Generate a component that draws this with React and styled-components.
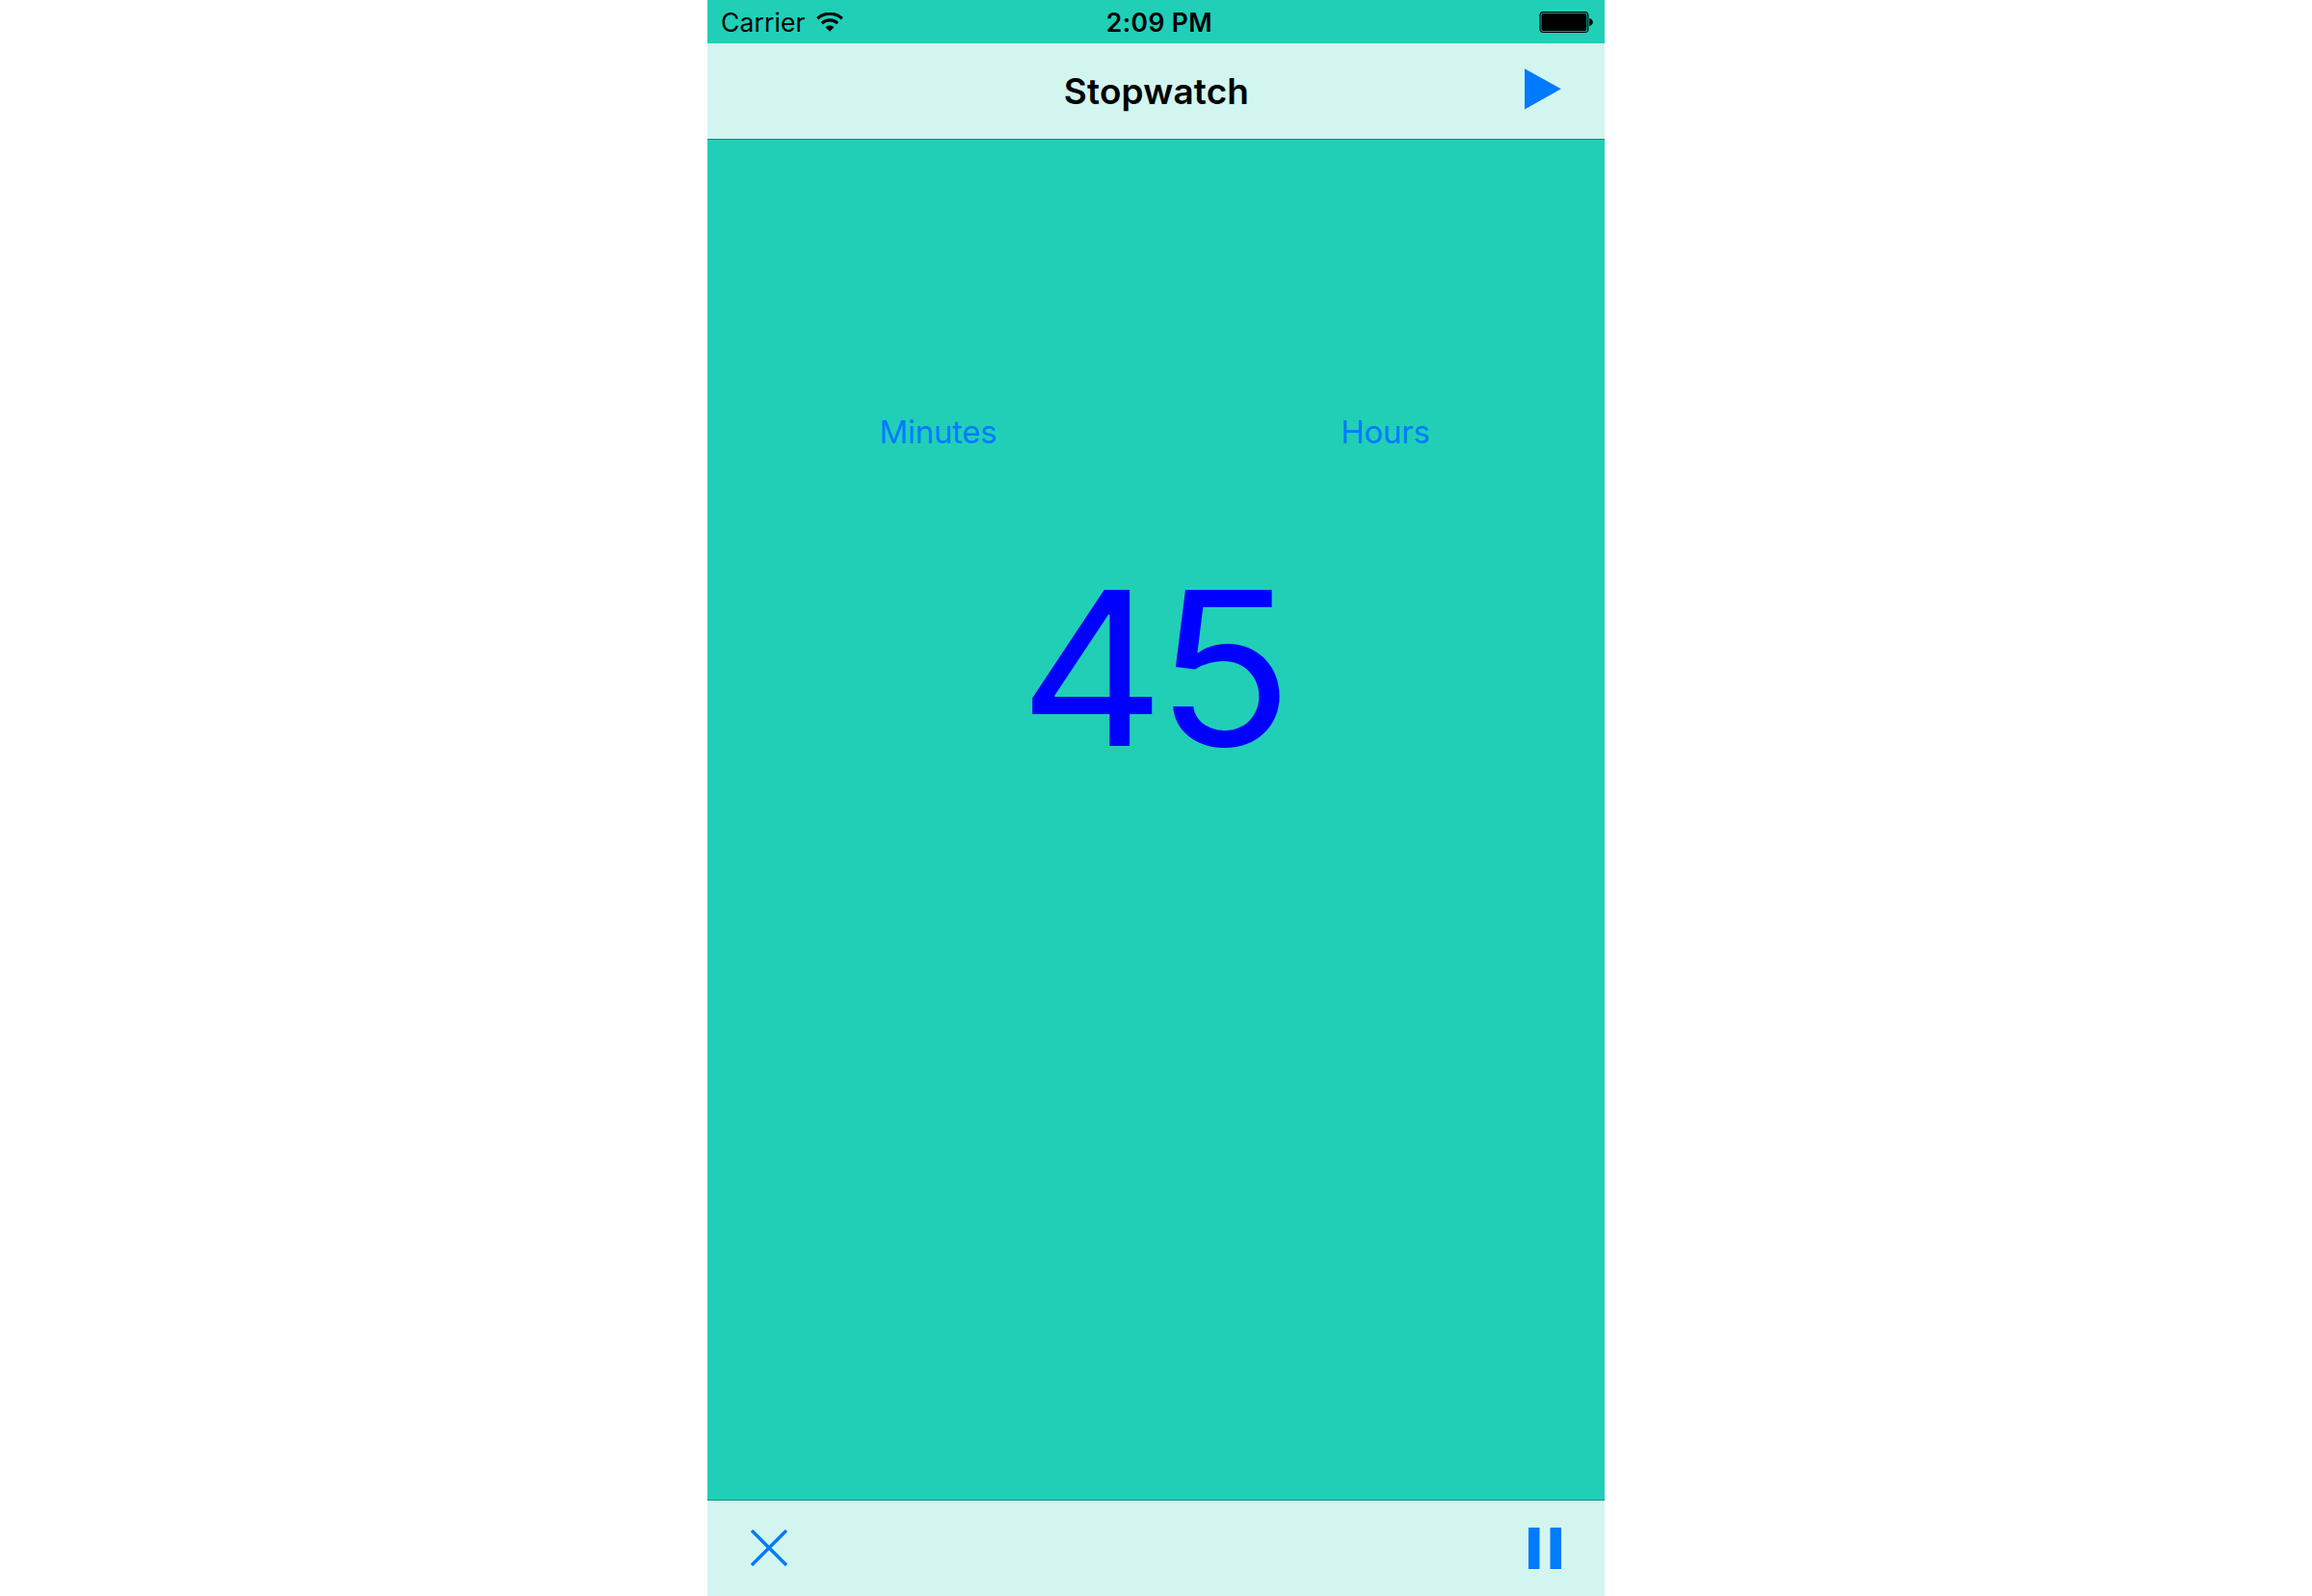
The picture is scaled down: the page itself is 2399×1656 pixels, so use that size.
import React from 'react';
import styled, { createGlobalStyle } from 'styled-components';

const GlobalStyle = createGlobalStyle`
  body { margin: 0; background: #fff; }
  * { box-sizing: border-box; }
`;

const Page = styled.div`
  display: flex;
  justify-content: center;
  height: 1656px;
  padding-left: 1px;
  font-family: Inter, Roboto, sans-serif;
`;

const Phone = styled.main`
  display: flex;
  flex-direction: column;
  width: 931px;
  height: 100%;
  margin-right: 1px;
  background: #21cfb7;
`;

const StatusBar = styled.header`
  display: grid;
  grid-template-columns: 1fr auto 1fr;
  align-items: center;
  height: 45px;
  padding: 1px 12px 0 14px;
  color: #000;
  font-size: 26.5px;
  line-height: 44px;
`;

const Carrier = styled.div`
  display: flex;
  align-items: center;
  gap: 11px;
  letter-spacing: 0.1px;
`;

const Clock = styled.time`
  padding-left: 5px;
  font-weight: 600;
  letter-spacing: 0.4px;
`;

const BatterySlot = styled.div`
  display: flex;
  justify-content: flex-end;
`;

const NavBar = styled.nav`
  display: grid;
  grid-template-columns: 1fr auto 1fr;
  align-items: center;
  height: 100px;
  padding: 0 45px;
  background: #d3f5f0;
  border-bottom: 1px solid #128a78;
`;

const Title = styled.h1`
  grid-column: 2;
  margin: 0;
  padding-left: 1px;
  color: #000;
  font-size: 37px;
  font-weight: 600;
  line-height: 99px;
  letter-spacing: 0.15px;
`;

const IconButton = styled.button`
  display: flex;
  justify-self: end;
  padding: 0;
  border: 0;
  background: none;
  color: #007aff;
  margin-top: ${(p) => p.$drop || 0}px;
`;

const Content = styled.section`
  display: flex;
  flex: 1;
  flex-direction: column;
  padding-top: 278px;
`;

const UnitRow = styled.div`
  display: flex;
  justify-content: space-between;
  padding: 0 181.5px 0 178.5px;
`;

const UnitButton = styled.button`
  padding: 0;
  border: 0;
  background: none;
  color: #007aff;
  font: 400 33px/50px Inter, Roboto, sans-serif;
  letter-spacing: -0.3px;
`;

const Counter = styled.output`
  display: block;
  margin-top: 81px;
  padding-right: 9px;
  color: #0000ff;
  font-size: 222px;
  line-height: 280px;
  letter-spacing: -9px;
  text-align: center;
  transform: scaleX(1.055);
`;

const Toolbar = styled.footer`
  display: flex;
  align-items: center;
  justify-content: space-between;
  height: 100px;
  padding: 0 45px;
  background: #d3f5f0;
  border-top: 1px solid #129280;
`;

const WifiIcon = () => (
  <svg width="28" height="21" viewBox="0 0 28 21" aria-label="Wi-Fi">
    <g fill="none" stroke="#000" strokeWidth="3.2">
      <path d="M1.2 6.2C8.5 -0.5 19.5 -0.5 26.8 6.2" />
      <path d="M5.8 11.1C10.5 6.8 17.5 6.8 22.2 11.1" />
    </g>
    <path d="M9.5 15.3C12 12.9 16 12.9 18.5 15.3L14 19.8Z" />
  </svg>
);

const BatteryIcon = () => (
  <svg width="56" height="22" viewBox="0 0 56 22" aria-label="Battery">
    <rect x="1" y="0.6" width="49.8" height="20.8" rx="3.2" fill="none" stroke="#000" strokeWidth="1.2" />
    <rect x="2.4" y="2" width="47" height="18" rx="1.8" />
    <path d="M52.2 7C54.2 7.5 55.8 9 55.8 11S54.2 14.5 52.2 15Z" />
  </svg>
);

const PlayIcon = () => (
  <svg width="38" height="43" viewBox="0 0 38 43">
    <path d="M0 0.3L37.8 21.3L0 42.5Z" fill="currentColor" />
  </svg>
);

const CloseIcon = () => (
  <svg width="38" height="38" viewBox="0 0 38 38">
    <path d="M1 1L37 37M37 1L1 37" stroke="currentColor" strokeWidth="3.4" />
  </svg>
);

const PauseIcon = () => (
  <svg width="34" height="43" viewBox="0 0 34 43">
    <path d="M0 0H11.5V43H0ZM22.5 0H34V43H22.5Z" fill="currentColor" />
  </svg>
);

export default function App() {
  return (
    <>
      <GlobalStyle />
      <Page>
        <Phone>
          <StatusBar>
            <Carrier>
              <span>Carrier</span>
              <WifiIcon />
            </Carrier>
            <Clock>2:09 PM</Clock>
            <BatterySlot>
              <BatteryIcon />
            </BatterySlot>
          </StatusBar>
          <NavBar>
            <Title>Stopwatch</Title>
            <IconButton $drop={-5} aria-label="Start">
              <PlayIcon />
            </IconButton>
          </NavBar>
          <Content>
            <UnitRow>
              <UnitButton>Minutes</UnitButton>
              <UnitButton>Hours</UnitButton>
            </UnitRow>
            <Counter>45</Counter>
          </Content>
          <Toolbar>
            <IconButton $drop={-1} aria-label="Reset">
              <CloseIcon />
            </IconButton>
            <IconButton aria-label="Pause">
              <PauseIcon />
            </IconButton>
          </Toolbar>
        </Phone>
      </Page>
    </>
  );
}
